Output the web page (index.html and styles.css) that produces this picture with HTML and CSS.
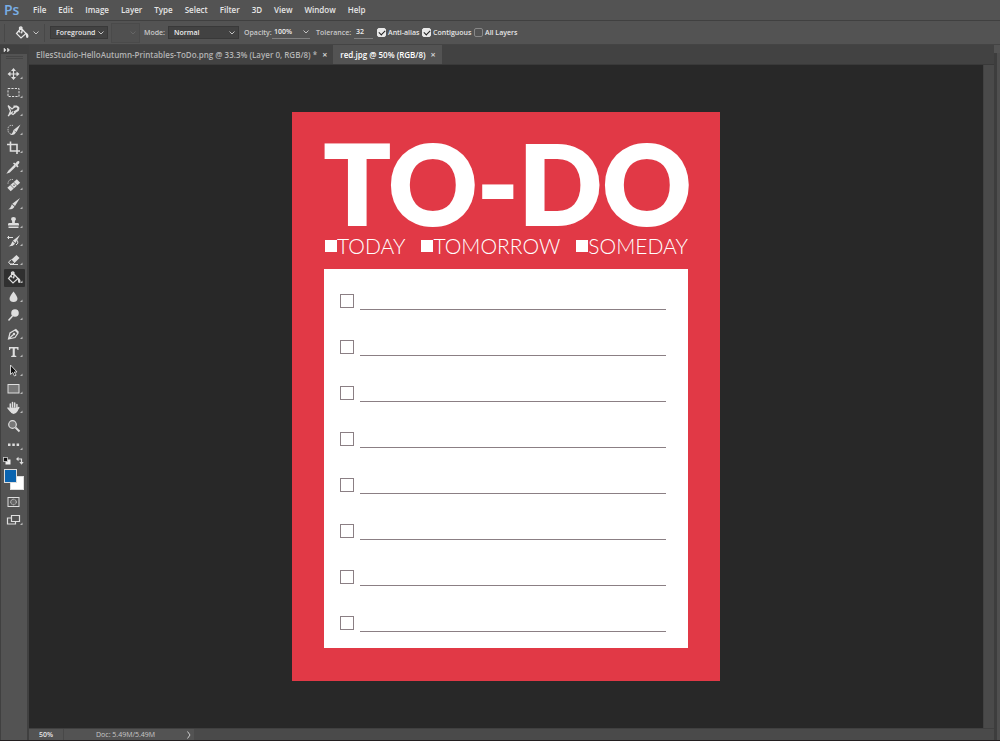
FILE: index.html
```html
<!DOCTYPE html>
<html lang="en">
<head>
<meta charset="utf-8">
<meta name="viewport" content="width=device-width, initial-scale=1">
<title>red.jpg @ 50% (RGB/8)</title>
<link rel="stylesheet" href="styles.css">
</head>
<body>
<svg class="defs" aria-hidden="true">
  <symbol id="chev" viewBox="0 0 8 8"><path d="M1.5 2.5 4 5 6.500 2.500" fill="none" stroke="currentColor"/></symbol>
  <symbol id="corner" viewBox="0 0 20 18"><path d="M18.500 11.500v2.500h-2.500z" fill="#bbb"/></symbol>
  <symbol id="bucket" viewBox="0 0 20 18"><path d="M9 4 14 9.500 9 14 4.500 9.500zM7.500 8.500V3.500q1.500-1.500 2.500 0V8" fill="none" stroke="currentColor" stroke-width="1.200"/><path d="M13 8.500q3 0 3.500 3.500 0 2-1.300 2t-1.200-2q0-2-1-3.500z" fill="currentColor"/><circle cx="9.500" cy="8.500" r="1" fill="currentColor"/></symbol>
</svg>
<nav class="menubar" aria-label="Main menu">
  <span class="logo">Ps</span>
  <button>File</button><button>Edit</button><button>Image</button><button>Layer</button><button>Type</button><button>Select</button><button>Filter</button><button>3D</button><button>View</button><button>Window</button><button>Help</button>
</nav>

<form class="options" aria-label="Tool options">
  <button class="current-tool" type="button" aria-label="Paint bucket presets"><svg class="icon"><use href="#bucket"/></svg><svg class="chev"><use href="#chev"/></svg></button>
  <span class="dropdown fill"><select aria-label="Fill source"><option>Foreground</option></select><svg class="chev"><use href="#chev"/></svg></span>
  <span class="dropdown pattern"><select aria-label="Pattern" disabled><option></option></select><svg class="chev"><use href="#chev"/></svg></span>
  <label class="field mode">Mode: <span class="dropdown"><select><option>Normal</option></select><svg class="chev"><use href="#chev"/></svg></span></label>
  <label class="field opacity">Opacity: <span class="entry"><input type="text" value="100%"><svg class="chev"><use href="#chev"/></svg></span></label>
  <label class="field tolerance">Tolerance: <span class="entry"><input type="text" value="32"></span></label>
  <label class="check anti"><input type="checkbox" checked>Anti-alias</label>
  <label class="check contig"><input type="checkbox" checked>Contiguous</label>
  <label class="check"><input type="checkbox">All Layers</label>
</form>

<main class="workspace">
  <aside class="toolbox">
    <button class="expand" aria-label="Expand toolbox"><svg viewBox="0 0 8 6"><path d="M1 1l2 2-2 2zM4.500 1l2 2-2 2z" fill="#ddd" stroke="#ddd" stroke-width=".5"/></svg></button>
    <div class="tools">
      <div class="grip"></div>
      <div class="tool-list">
        <button class="tool" aria-label="Move"><svg viewBox="0 0 20 18"><path d="M5 9h9M9.500 4.500v9" stroke="currentColor" stroke-width="1.200"/><path d="M9.500 3 12 6H7zM9.500 15 12 12H7zM3.500 9l3-2.500v5zM15.500 9l-3-2.500v5z" fill="currentColor"/><use href="#corner"/></svg></button>
        <button class="tool" aria-label="Rectangular marquee"><svg viewBox="0 0 20 18"><rect x="4" y="4.500" width="11" height="8" fill="none" stroke="currentColor" stroke-dasharray="2.200 1.200"/><use href="#corner"/></svg></button>
        <button class="tool" aria-label="Magnetic lasso"><svg viewBox="0 0 20 18"><path d="M4 3.500 8 7l3-2.500M4 3.500 6.500 9l-2 5M6 10.500 9 12.500l2.500-2M4 14l5-4.500" fill="none" stroke="currentColor" stroke-width="1.200"/><path d="M9.500 4.500h3q3 1 1.200 3.800L10 10.500" fill="none" stroke="currentColor" stroke-width="2.200"/><use href="#corner"/></svg></button>
        <button class="tool" aria-label="Quick selection"><svg viewBox="0 0 20 18"><path d="M9 4.500q-5-1-5 4t5 4.500" fill="none" stroke="currentColor" stroke-dasharray="1 .8"/><path d="M16.500 3.500 12.500 11l-3-2zM9.500 9l2.500 2.500q-1.500 3-6 2.500 2.500-1 3.500-5z" fill="currentColor"/><use href="#corner"/></svg></button>
        <button class="tool" aria-label="Crop"><svg viewBox="0 0 20 18"><path d="M6.500 2.500V12H16M3 5.500h10V15" fill="none" stroke="currentColor" stroke-width="1.600"/><use href="#corner"/></svg></button>
        <button class="tool" aria-label="Eyedropper"><svg viewBox="0 0 20 18"><path d="M11 7 5 13l-1 1.500L5.500 14l6-6" fill="none" stroke="currentColor" stroke-width="1.300"/><path d="M9 5.500l1-1 1.500 1L13 3.500q2-1 2.500.5 0 1.500-2 3l1 1.500-1 1z" fill="currentColor"/><use href="#corner"/></svg></button>
        <button class="tool" aria-label="Healing brush"><svg viewBox="0 0 20 18"><path d="M9 3.500Q4 3 4 8" fill="none" stroke="currentColor" stroke-dasharray="1 .8"/><path d="M5 13.500 14.500 5" stroke="currentColor" stroke-width="5"/><path d="m6.500 9 4 4M9.500 6l4 4" stroke="#535353" stroke-width=".7"/><path d="M9.300 9.200h1.500" stroke="#444"/><use href="#corner"/></svg></button>
        <button class="tool" aria-label="Brush"><svg viewBox="0 0 20 18"><path d="M16 3 11 11 8.300 8.800zM7.800 9.200l2.700 2.500q-1.500 3-6.500 2.500 2.500-.5 3.800-5z" fill="currentColor"/><use href="#corner"/></svg></button>
        <button class="tool" aria-label="Clone stamp"><svg viewBox="0 0 20 18"><path d="M9.500 3q2.500 0 2.500 2.200Q10.500 7 10.800 9H14q1 0 1 1.500v1H4v-1Q4 9 5 9h3.200Q8.500 7 7 5.200 7 3 9.500 3zM4.500 12.500h10V14h-10z" fill="currentColor"/><use href="#corner"/></svg></button>
        <button class="tool" aria-label="History brush"><svg viewBox="0 0 20 18"><path d="M16 3 11.500 11 8.800 8.800zM8.300 9.200l2.700 2.500Q9 14.700 4.500 14.200q2.500-.5 3.800-5z" fill="currentColor"/><path d="M4 5.500h5M5 4 3.500 5.500 5 7M13.500 8.500q1.500 3-1.500 4.500" fill="none" stroke="currentColor"/><use href="#corner"/></svg></button>
        <button class="tool" aria-label="Eraser"><svg viewBox="0 0 20 18"><path d="m7.500 8.500 5-4.500 3 3-5 5z" fill="currentColor"/><path d="m7.500 8.500-3 2.500 1.500 2h3l1.500-1.500M6 13.500h8" fill="none" stroke="currentColor"/><use href="#corner"/></svg></button>
        <button class="tool active" aria-label="Paint bucket" aria-pressed="true"><svg viewBox="0 0 20 18"><use href="#bucket"/><use href="#corner"/></svg></button>
        <button class="tool" aria-label="Blur"><svg viewBox="0 0 20 18"><path d="M9.500 3.500Q13.500 8.500 13.500 11q-.5 3-4 3t-4-3q0-2.500 4-7.500z" fill="currentColor"/><use href="#corner"/></svg></button>
        <button class="tool" aria-label="Dodge"><svg viewBox="0 0 20 18"><circle cx="11" cy="7" r="3.800" fill="currentColor"/><path d="M8.500 10 4.500 14.500" stroke="currentColor" stroke-width="1.500"/><use href="#corner"/></svg></button>
        <button class="tool" aria-label="Pen"><svg viewBox="0 0 20 18"><path d="M4.500 14 6 8l5-3 3 3-3 4.500zM4.500 14l5-4.500M11.500 4.200 14.500 7.500" fill="none" stroke="currentColor" stroke-width="1.200"/><circle cx="10" cy="9" r="1.200" fill="currentColor"/><use href="#corner"/></svg></button>
        <button class="tool" aria-label="Horizontal type"><svg viewBox="0 0 20 18"><path d="M5 4h9.500v3h-1l-.5-1.500h-2.200v7l1.500.5v1H7.200v-1l1.500-.5v-7H6.500L6 7H5z" fill="currentColor"/><use href="#corner"/></svg></button>
        <button class="tool" aria-label="Path selection"><svg viewBox="0 0 20 18"><path d="M6.500 3v9.500L8.700 10.500 10.500 14l1.600-.8L10.300 10H13z" fill="#111" stroke="currentColor" stroke-width=".9"/><use href="#corner"/></svg></button>
        <button class="tool" aria-label="Rectangle"><svg viewBox="0 0 20 18"><rect x="4" y="4.500" width="11" height="8.500" fill="#777" stroke="currentColor"/><use href="#corner"/></svg></button>
        <button class="tool" aria-label="Hand"><svg viewBox="0 0 20 18"><path d="M6.300 9.500V5M8.500 8V3.500M10.700 8V4M12.900 9V5.500M4 9l2.500 3M14.800 8.500l-2 3" stroke="currentColor" stroke-width="1.500" stroke-linecap="round"/><path d="M5.600 8.500h8V12q-1.500 3-4 3T6 12z" fill="currentColor"/><use href="#corner"/></svg></button>
        <button class="tool" aria-label="Zoom"><svg viewBox="0 0 20 18"><circle cx="8.500" cy="7.500" r="3.800" fill="#777" stroke="currentColor" stroke-width="1.200"/><path d="m11.500 10.500 4 4" stroke="currentColor" stroke-width="1.800"/></svg></button>
        <button class="tool" aria-label="More tools"><svg viewBox="0 0 20 18"><path d="M4 7.500h2.500V10H4zM8.300 7.500h2.500V10H8.300zM12.600 7.500h2.500V10h-2.500z" fill="currentColor"/><use href="#corner"/></svg></button>
      </div>
      <div class="color-actions">
        <button aria-label="Default colors"><svg viewBox="0 0 10 10"><rect x="3.500" y="3.500" width="5" height="5" fill="#eee"/><rect x="1.500" y="1.500" width="4" height="4" fill="#111" stroke="#ccc" stroke-width=".8"/></svg></button>
        <button aria-label="Swap colors"><svg viewBox="0 0 10 10"><path d="M2.500 3h4v4" fill="none" stroke="#ddd" stroke-width="1.200"/><path d="M3.500 .8v4.400L1 3zM4.300 6h4.400L6.500 8.800z" fill="#ddd"/></svg></button>
      </div>
      <div class="swatches">
        <button class="fore" aria-label="Foreground color"></button>
        <button class="back" aria-label="Background color"></button>
      </div>
      <button class="tool mask" aria-label="Quick mask"><svg viewBox="0 0 20 18"><rect x="4" y="4.500" width="11" height="9" fill="none" stroke="currentColor"/><circle cx="9.500" cy="9" r="2.800" fill="#666" stroke="currentColor" stroke-dasharray="1.200 .6"/></svg></button>
      <button class="tool screen" aria-label="Screen mode"><svg viewBox="0 0 20 18"><path d="M7 7H3.500v6h8v-2M7.500 4.500h8v6h-8z" fill="none" stroke="currentColor" stroke-width="1.200"/><use href="#corner"/></svg></button>
    </div>
  </aside>

  <section class="document">
    <div class="tabs" role="tablist">
      <div class="tab"><button role="tab" class="name">EllesStudio-HelloAutumn-Printables-ToDo.png @ 33.3% (Layer 0, RGB/8) *</button><button class="close" aria-label="Close">×</button></div>
      <div class="tab selected"><button role="tab" class="name" aria-selected="true">red.jpg @ 50% (RGB/8)</button><button class="close" aria-label="Close">×</button></div>
    </div>
    <div class="viewport">
      <div class="canvas">
        <article class="page">
          <h1>TO-DO</h1>
          <div class="when">
            <label><input type="checkbox">TODAY</label>
            <label><input type="checkbox">TOMORROW</label>
            <label><input type="checkbox">SOMEDAY</label>
          </div>
          <ul class="list">
            <li><input type="checkbox" aria-label="Item 1"><span class="rule"></span></li>
            <li><input type="checkbox" aria-label="Item 2"><span class="rule"></span></li>
            <li><input type="checkbox" aria-label="Item 3"><span class="rule"></span></li>
            <li><input type="checkbox" aria-label="Item 4"><span class="rule"></span></li>
            <li><input type="checkbox" aria-label="Item 5"><span class="rule"></span></li>
            <li><input type="checkbox" aria-label="Item 6"><span class="rule"></span></li>
            <li><input type="checkbox" aria-label="Item 7"><span class="rule"></span></li>
            <li><input type="checkbox" aria-label="Item 8"><span class="rule"></span></li>
          </ul>
        </article>
      </div>
      <div class="scroll"></div>
    </div>
    <footer class="status">
      <input class="zoom" type="text" value="50%" aria-label="Zoom level">
      <span class="doc">Doc: 5.49M/5.49M</span>
      <button aria-label="Status options"><svg viewBox="0 0 6 10"><path d="m1.500 1.500 2.500 3.500-2.500 3.500" fill="none" stroke="#ccc"/></svg></button>
    </footer>
  </section>
  <aside class="dock"></aside>
</main>
</body>
</html>
```

FILE: styles.css
```css
* { box-sizing: border-box; }

body {
  margin: 0;
  min-height: 100vh;
  display: grid;
  grid-template-rows: 21px 24px 1fr;
  background: #535353;
  border-bottom: 1px solid #231f20;
  color: #e6e6e6;
  font: 600 7px/10px "Open Sans", "Noto Sans", sans-serif;
}

button, input, select { font: inherit; color: inherit; margin: 0; }
button { padding: 0; border: 0; background: none; }
svg { display: block; }
.defs { position: absolute; width: 0; height: 0; }
.chev { width: 8px; height: 8px; color: #c4c4c4; }

/* Menu bar */
.menubar {
  display: flex;
  align-items: center;
  gap: 12px;
  padding-left: 4px;
  border-bottom: 1px solid #404040;
  font-size: 8px;
}
.logo { width: 17px; color: #79aee6; font-size: 14px; line-height: 18px; }

/* Options bar */
.options {
  display: flex;
  align-items: center;
  padding-left: 4px;
  border-bottom: 1px solid #444;
}
.current-tool {
  display: flex;
  align-items: center;
  width: 41px;
  height: 18px;
  padding-left: 7px;
  border-left: 1px solid #484848;
  border-right: 1px solid #484848;
}
.current-tool .icon { width: 20px; height: 18px; }
.dropdown {
  display: grid;
  grid-template-columns: 1fr 10px;
  align-items: center;
  height: 13px;
  background: #424242;
  border: 1px solid #393939;
}
.dropdown select {
  grid-area: 1 / 1 / 2 / 3;
  appearance: none;
  width: 100%;
  height: 11px;
  padding: 0 0 0 5px;
  border: 0;
  background: none;
}
.dropdown .chev { grid-area: 1 / 2; pointer-events: none; }
.fill { width: 58px; margin-left: 5px; }
.pattern { width: 29px; height: 20px; margin: 0 4px 0 3px; background: #505050; border-color: #4a4a4a; }
.pattern .chev { color: #666; }
.field { display: flex; align-items: center; justify-content: space-between; color: #c8c8c8; }
.field select, .field input { color: #eee; }
.mode { width: 95px; margin-right: 5px; }
.mode .dropdown { width: 71px; }
.entry { display: flex; align-items: center; height: 12px; border-bottom: 1px solid #808080; }
.entry input { width: 100%; min-width: 0; padding: 0 0 0 2px; border: 0; background: none; }
.entry .chev { flex: none; }
.opacity { width: 66px; margin-right: 6px; }
.opacity .entry { width: 38px; }
.tolerance { width: 57px; margin-right: 4px; }
.tolerance .entry { width: 19px; }
.check { display: flex; align-items: center; gap: 2px; }
.check input {
  appearance: none;
  display: grid;
  place-items: center;
  width: 9px;
  height: 9px;
  border: 1px solid #888;
  border-radius: 2px;
}
.check input:checked { background: #e9e9e9; border-color: #e9e9e9; }
.check input:checked::after {
  content: "";
  width: 5px;
  height: 3px;
  margin-bottom: 1px;
  border: solid #222;
  border-width: 0 0 1px 1px;
  transform: rotate(-45deg);
}
.anti { width: 45px; }
.contig { width: 52px; }

/* Toolbox */
.workspace { display: grid; grid-template-columns: 29px 1fr 6px; }
.toolbox { display: grid; grid-template-rows: 9px 1fr; background: #404040; }
.expand svg { width: 8px; height: 6px; margin-left: 3px; }
.tools {
  display: flex;
  flex-direction: column;
  margin: 0 2px 0 1px;
  padding: 0 2px 0 3px;
  background: #535353;
}
.grip { height: 3px; margin: 2px 2px 6px; border: solid #464646; border-width: 1px 0; }
.tool-list { display: flex; flex-direction: column; height: 389px; }
.tool-list .tool { flex: 1; }
.tool { display: flex; align-items: center; width: 21px; border-radius: 1px; color: #dedede; }
.tool svg { width: 20px; height: 18px; }
.tool.active { background: #303030; }
.color-actions { display: flex; justify-content: space-between; padding: 2px 0 3px; }
.color-actions button, .color-actions svg { width: 10px; height: 10px; }
.color-actions button { margin-left: -2px; }
.swatches { display: grid; grid-template-columns: 6px 7px 7px; grid-template-rows: 7px 7px 7px; }
.fore { grid-area: 1 / 1 / 3 / 3; z-index: 1; background: #0a64b0; border: 1px solid #ddd; }
.back { grid-area: 2 / 2 / 4 / 4; background: #fff; border: 1px solid #ddd; }
.mask { margin-top: 3px; }

/* Document window */
.document { display: grid; grid-template-rows: 20px 1fr 12px; min-width: 0; }
.tabs { display: flex; background: #424242; border-bottom: 1px solid #393939; font-size: 8px; }
.tab { display: flex; align-items: center; gap: 5px; padding: 0 6px 0 7px; color: #b4b4b4; }
.tab.selected { background: #535353; color: #fff; }
.tab .close { color: #ccc; font-size: 9px; font-weight: 700; }
.viewport { display: grid; grid-template-columns: 1fr 11px; }
.canvas { display: grid; place-items: center; background: #282828; }
.scroll { background: #4a4a4a; border-left: 1px solid #424242; }
.status { display: flex; align-items: center; background: #4a4a4a; border-top: 1px solid #404040; }
.zoom { width: 35px; height: 11px; padding: 0 0 0 10px; border: 0; border-right: 1px solid #484848; background: #535353; }
.doc { width: 122px; padding-left: 32px; background: #535353; color: #c8c8c8; font-weight: 400; line-height: 11px; }
.status button { width: 8px; height: 11px; background: #535353; }
.status svg { width: 6px; height: 10px; }
.dock { margin-top: 8px; background: #4f4f4f; border-left: 3px solid #3d3d3d; }

/* To-do sheet */
.page {
  display: flex;
  flex-direction: column;
  width: 428px;
  padding: 32px 32px 33px;
  background: #e13946;
  color: #fff;
}
.page h1 {
  margin: 0;
  font: 900 110px/76px Lato, sans-serif;
  -webkit-text-stroke: 2px #fff;
  text-align: center;
  white-space: nowrap;
}
.when {
  display: flex;
  justify-content: space-between;
  margin: 15px 0 12px;
  padding-left: 1px;
  font: 300 21px/22px Lato, sans-serif;
}
.when label { display: flex; align-items: center; }
.when input { appearance: none; width: 12px; height: 12px; background: #fff; }
.list {
  display: grid;
  gap: 29px;
  margin: 0;
  padding: 24px 22px 16px 16px;
  background: #fff;
  list-style: none;
}
.list li { display: flex; align-items: flex-end; gap: 6px; height: 17px; }
.list input { appearance: none; width: 14px; height: 14px; margin-bottom: 2px; border: 1px solid #8b7f84; }
.rule { flex: 1; height: 1px; background: #8b7f84; }
```
